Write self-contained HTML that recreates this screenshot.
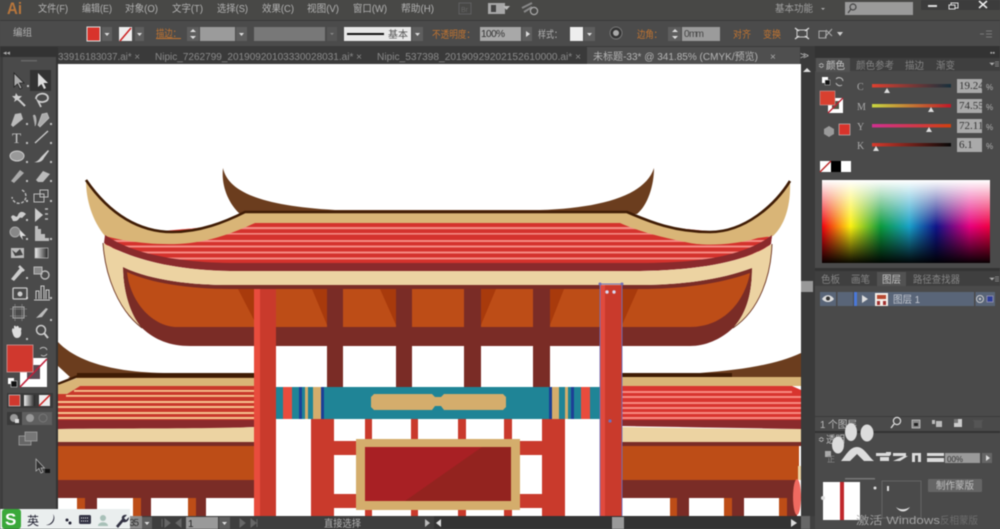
<!DOCTYPE html>
<html>
<head>
<meta charset="utf-8">
<style>
html,body{margin:0;padding:0;width:1000px;height:529px;overflow:hidden;background:#4a4a4a}
svg{display:block;filter:blur(.6px)}
text{font-family:"Liberation Sans","Noto Sans CJK SC",sans-serif;font-size:10px;fill:#b2b2b2}
.o{fill:#c27430}
.d{fill:#858585}
</style>
</head>
<body>
<svg width="1000" height="529" viewBox="0 0 1000 529" xmlns="http://www.w3.org/2000/svg">
<defs>
<linearGradient id="hue" x1="0" x2="1" y1="0" y2="0">
<stop offset="0" stop-color="#f00010"/><stop offset=".17" stop-color="#fdf010"/><stop offset=".35" stop-color="#0c9a3c"/><stop offset=".52" stop-color="#18a0c8"/><stop offset=".68" stop-color="#101488"/><stop offset=".88" stop-color="#e6007e"/><stop offset="1" stop-color="#f00040"/>
</linearGradient>
<linearGradient id="wh" x1="0" x2="0" y1="0" y2="1"><stop offset="0" stop-color="#fff"/><stop offset=".56" stop-color="#fff" stop-opacity="0"/></linearGradient>
<linearGradient id="bl" x1="0" x2="0" y1="0" y2="1"><stop offset=".56" stop-color="#000" stop-opacity="0"/><stop offset="1" stop-color="#000" stop-opacity=".96"/></linearGradient>
<linearGradient id="tC" x1="0" x2="1" y1="0" y2="0"><stop offset="0" stop-color="#e04030"/><stop offset="1" stop-color="#17303c"/></linearGradient>
<linearGradient id="tM" x1="0" x2="1" y1="0" y2="0"><stop offset="0" stop-color="#c8d840"/><stop offset="1" stop-color="#c01828"/></linearGradient>
<linearGradient id="tY" x1="0" x2="1" y1="0" y2="0"><stop offset="0" stop-color="#d03090"/><stop offset="1" stop-color="#d04010"/></linearGradient>
<linearGradient id="tK" x1="0" x2="1" y1="0" y2="0"><stop offset="0" stop-color="#d83a2c"/><stop offset="1" stop-color="#080808"/></linearGradient>
<linearGradient id="gr" x1="0" x2="1" y1="0" y2="0"><stop offset="0" stop-color="#eee"/><stop offset="1" stop-color="#222"/></linearGradient>
<clipPath id="roofclip"><path d="M105 236L255 223L622 223L772 237L770 245C745 262 720 265 640 265L230 265C170 265 125 255 105 245Z"/></clipPath>
<clipPath id="canvas"><rect x="58" y="64" width="743" height="452"/></clipPath>
</defs>

<!-- base -->
<rect width="1000" height="529" fill="#4a4a4a"/>
<rect y="0" width="1000" height="20" fill="#484846"/>
<rect y="20" width="1000" height="1.5" fill="#3a3a3a"/>
<rect y="21" width="1000" height="26" fill="#4b4b4b"/>
<rect y="46" width="815" height="18" fill="#3a3a3a"/>
<rect x="0" y="47" width="58" height="482" fill="#4a4a4a"/>
<rect x="0" y="47" width="3" height="482" fill="#3d3d3d"/>
<rect x="0" y="47" width="58" height="10" fill="#333"/>
<rect x="56" y="57" width="2" height="460" fill="#333"/>
<rect x="587" y="47" width="213" height="17" fill="#4f4f4f"/>

<!-- canvas -->
<rect x="58" y="64" width="743" height="452" fill="#fff"/>
<g clip-path="url(#canvas)">
  <!-- lower wings left -->
  <path d="M58 342C75 360 110 373 170 373L254 373V378H58Z" fill="#6b3d1e"/>
  <path d="M58 366L70 377L58 382Z" fill="#fff"/>
  <rect x="77" y="373" width="177" height="4.5" fill="#3f1c05"/>
  <path d="M58 384L78 376" stroke="#3f1c05" stroke-width="2.5"/>
  <path d="M58 385L77 378H254V386H80L67 394H58Z" fill="#d9b577"/>
  <path d="M67 394L80 386H254V421H58V394Z" fill="#c8382b"/>
  <g fill="#f7c48e">
    <rect x="74" y="390" width="180" height="1.8"/><rect x="66" y="395" width="188" height="1.8"/>
    <rect x="58" y="401" width="196" height="2"/><rect x="58" y="406" width="196" height="2"/>
    <rect x="58" y="412" width="196" height="2"/><rect x="58" y="417" width="196" height="2"/>
  </g>
  <path d="M58 420L254 420V427C200 430 120 428 58 429Z" fill="#8a2a2c"/>
  <path d="M58 429C120 428 200 429 254 427V442H58Z" fill="#ecd3a2"/>
  <rect x="58" y="442" width="196" height="4" fill="#7a2c26"/>
  <rect x="58" y="446" width="196" height="34" fill="#bd4d17"/>
  <rect x="58" y="480" width="196" height="18" fill="#7a2c26"/>
  <g fill="#bd4d17"><rect x="77" y="498" width="8" height="18"/><rect x="133" y="498" width="8" height="18"/><rect x="188" y="498" width="8" height="18"/></g>
  <g fill="#7a2c26"><rect x="85" y="498" width="12" height="18"/><rect x="141" y="498" width="10" height="18"/><rect x="196" y="498" width="10" height="18"/></g>

  <!-- lower wings right -->
  <path d="M622 373L700 373C740 370 775 365 801 353V378H622Z" fill="#6b3d1e"/>
  <rect x="622" y="373" width="110" height="4.5" fill="#3f1c05"/>
  <rect x="622" y="377" width="179" height="9" fill="#d9b577"/>
  <path d="M622 386H792L801 390V421H622Z" fill="#d8352f"/>
  <g fill="#f88a80">
    <rect x="622" y="391" width="170" height="2"/><rect x="622" y="396" width="179" height="2"/>
    <rect x="622" y="402" width="179" height="2"/><rect x="622" y="407" width="179" height="2"/>
    <rect x="622" y="412" width="179" height="2"/><rect x="622" y="417" width="179" height="2"/>
  </g>
  <path d="M622 420H801V429C740 428 680 427 622 426Z" fill="#8a2a2c"/>
  <path d="M622 427C680 428 740 429 801 429V442H622Z" fill="#ecd3a2"/>
  <rect x="622" y="442" width="179" height="4" fill="#7a2c26"/>
  <rect x="622" y="446" width="177" height="34" fill="#bd4d17"/>
  <rect x="622" y="480" width="175" height="18" fill="#7a2c26"/>
  <g fill="#bd4d17"><rect x="670" y="498" width="7" height="18"/><rect x="724" y="498" width="8" height="18"/><rect x="779" y="498" width="8" height="18"/></g>
  <g fill="#7a2c26"><rect x="677" y="498" width="12" height="18"/><rect x="732" y="498" width="12" height="18"/><rect x="787" y="498" width="10" height="18"/></g>
  <ellipse cx="797" cy="497" rx="4" ry="18" fill="#f06a60"/>
  <rect x="798" y="466" width="3" height="14" fill="#ecd3a2"/>

  <!-- back roof -->
  <path d="M223 168C228 192 262 206 335 210L540 210C600 208 645 196 654 168C654 185 648 205 637 214H240C228 203 221 185 223 168Z" fill="#6b3d1e"/>

  <!-- main body maroon + orange -->
  <path d="M123 267C150 280 190 285 230 285H640C680 285 720 280 752 268C752 290 748 312 733 328C720 340 705 346 690 346H190C170 346 155 340 142 328C130 315 123 290 123 267Z" fill="#7a2c26"/>
  <path d="M127 272C150 283 190 289 230 289H640C680 289 720 284 750 273C745 300 725 327 690 327H175C150 325 130 300 127 272Z" fill="#bd4d17"/>
  <!-- shades -->
  <g fill="#a83a0c">
    <path d="M238 289H254V320Z"/><path d="M312 289H327V325Z"/><path d="M380 289H396V325Z"/>
    <path d="M481 289H496L481 325Z"/><path d="M550 289H564L550 325Z"/><path d="M622 289H638L622 325Z"/>
  </g>
  <!-- columns -->
  <g fill="#7a2c26">
    <rect x="327" y="289" width="16" height="98"/><rect x="396" y="289" width="16" height="98"/>
    <rect x="464" y="289" width="17" height="98"/><rect x="533" y="289" width="17" height="98"/>
  </g>

  <!-- red roof -->
  <path d="M105 236L255 223L622 223L772 237L770 245C745 262 720 265 640 265L230 265C170 265 125 255 105 245Z" fill="#d4322d"/>
  <g clip-path="url(#roofclip)" fill="#f58a82">
    <rect x="90" y="227" width="700" height="2.2"/>
    <rect x="90" y="233" width="700" height="1.6"/>
    <rect x="90" y="240" width="700" height="2"/>
    <rect x="90" y="245.500" width="700" height="2"/>
    <rect x="90" y="251.500" width="700" height="2"/>
    <rect x="90" y="257.500" width="700" height="2"/>
  </g>
  <!-- tan -->
  <path d="M86 180C110 215 140 232 172 232C200 232 225 222 245 213L627 212C650 222 675 232 710 232C745 232 775 205 790 181C791 205 785 225 773 236L758 238C735 245 705 246 690 243C665 238 640 232 620 223H255C235 232 215 240 190 243C165 246 130 243 105 236C92 220 86 200 86 180Z" fill="#d9b577"/>
  <path d="M86 180C110 215 140 232 172 232C200 232 225 222 245 212H627C650 222 675 232 710 232C745 232 775 205 790 181" fill="none" stroke="#3f1c05" stroke-width="2.600"/>
  <!-- maroon band -->
  <path d="M105 235C130 252 170 262 230 263H640C700 263 745 256 772 235L771 244C745 262 700 270 640 271H230C170 270 130 258 104 243Z" fill="#8a2a2c"/>
  <!-- cream -->
  <path d="M103 243C130 258 170 270 230 271H640C700 270 745 262 772 244C771 275 760 310 733 328C748 312 752 290 752 268C720 280 680 285 640 285H230C190 285 150 280 123 267C123 290 130 315 142 328C118 310 105 275 103 243Z" fill="#ecd3a2"/>
  <path d="M103 243C105 275 118 310 142 328M772 244C771 275 760 310 733 328" fill="none" stroke="#6b3320" stroke-width=".9"/>

  <!-- teal band -->
  <rect x="276" y="387" width="324" height="32" fill="#1f8496"/>
  <g fill="#e84c3d"><rect x="283" y="387" width="9" height="32"/><rect x="581" y="387" width="9" height="32"/></g>
  <g fill="#1c3f96"><rect x="299" y="387" width="3" height="32"/><rect x="321" y="387" width="3" height="32"/><rect x="549" y="387" width="3" height="32"/><rect x="571" y="387" width="3" height="32"/></g>
  <g fill="#d4ad6c"><rect x="305" y="387" width="3" height="32"/><rect x="313" y="387" width="8" height="32"/><rect x="552" y="387" width="7" height="32"/><rect x="565" y="387" width="3" height="32"/></g>
  <path d="M374 394H432L435 397H441L444 394H503L506 397V407L503 410H444L441 406H435L432 410H374L371 407V397Z" fill="#d4ad6c"/>

  <!-- lower structure -->
  <g fill="#c93a2c">
    <rect x="311" y="419" width="23" height="97"/><rect x="542" y="419" width="23" height="97"/>
    <rect x="365" y="419" width="7" height="97"/><rect x="411" y="419" width="7" height="97"/>
    <rect x="458" y="419" width="8" height="97"/><rect x="504" y="419" width="8" height="97"/>
    <rect x="334" y="441" width="208" height="14"/><rect x="334" y="494" width="208" height="14"/>
  </g>
  <rect x="356" y="439" width="164" height="71" fill="#d4ad6c"/>
  <rect x="365" y="447" width="146" height="54" fill="#a82024"/>
  <path d="M482 447H511V501H405Z" fill="#93231f"/>

  <!-- main pillars -->
  <rect x="254" y="289" width="22" height="227" fill="#c93a2c"/>
  <rect x="254" y="289" width="6" height="227" fill="#e84c3d"/>
  <rect x="600" y="285" width="22" height="231" fill="#c93a2c"/>
  <rect x="600" y="285" width="5" height="231" fill="#e04a3e"/>
  <!-- selection -->
  <path d="M600 284V516M622 284V516M600 284H622" fill="none" stroke="#6f6fb8" stroke-width=".9"/>
  <g fill="#6f6fb8"><circle cx="600" cy="284" r="1.500"/><circle cx="622" cy="284" r="1.500"/><circle cx="610" cy="421" r="1.600"/></g>
  <g fill="#d8d8f0"><circle cx="607" cy="292" r="1.700"/><circle cx="614" cy="292" r="1.700"/></g>
</g>

<!-- menu bar -->
<text x="7" y="14" style="font-size:17px;font-weight:bold;fill:#b8763c" textLength="15" lengthAdjust="spacingAndGlyphs">Ai</text>
<text x="38" y="12" textLength="30" lengthAdjust="spacingAndGlyphs">文件(F)</text>
<text x="82" y="12" textLength="30" lengthAdjust="spacingAndGlyphs">编辑(E)</text>
<text x="125" y="12" textLength="33" lengthAdjust="spacingAndGlyphs">对象(O)</text>
<text x="172" y="12" textLength="31" lengthAdjust="spacingAndGlyphs">文字(T)</text>
<text x="217" y="12" textLength="31" lengthAdjust="spacingAndGlyphs">选择(S)</text>
<text x="262" y="12" textLength="32" lengthAdjust="spacingAndGlyphs">效果(C)</text>
<text x="307" y="12" textLength="32" lengthAdjust="spacingAndGlyphs">视图(V)</text>
<text x="353" y="12" textLength="34" lengthAdjust="spacingAndGlyphs">窗口(W)</text>
<text x="401" y="12" textLength="33" lengthAdjust="spacingAndGlyphs">帮助(H)</text>
<rect x="459" y="3" width="12" height="11" fill="none" stroke="#5f5f5f"/>
<text x="461" y="12" style="font-size:7px;fill:#666">Br</text>
<rect x="488" y="3" width="17" height="11" fill="#a8a8a8"/>
<rect x="491" y="5" width="5" height="7" fill="#444"/>
<path d="M503 6H510L506.500 10Z" fill="#bbb"/>
<path d="M522 8L532 3M524 12L532 7" stroke="#888" stroke-width="2"/>
<circle cx="534" cy="11" r="3.600" fill="none" stroke="#aaa" stroke-width="1.200"/>
<text x="775" y="12" textLength="38" lengthAdjust="spacingAndGlyphs" style="fill:#a0a0a0">基本功能</text>
<path d="M821 8H825L823 10Z" fill="#aaa"/>
<rect x="845" y="2" width="68" height="13" fill="#9a9a9a"/>
<circle cx="853" cy="7" r="3" fill="none" stroke="#444" stroke-width="1.200"/>
<path d="M851 9L848 13" stroke="#444" stroke-width="1.200"/>
<rect x="921" y="0" width="79" height="10" fill="#3c3c3c"/>
<rect x="928" y="5" width="9" height="2" fill="#ddd"/>
<rect x="951" y="3" width="7" height="5" fill="none" stroke="#ddd"/><rect x="949" y="5" width="6" height="4" fill="#3c3c3c" stroke="#ddd"/>
<path d="M979 1L987 8M987 1L979 8" stroke="#eee" stroke-width="1.500"/>

<!-- control bar -->
<text x="13" y="36" textLength="19" lengthAdjust="spacingAndGlyphs">编组</text>
<rect x="87" y="27" width="13" height="14" fill="#d8332b" stroke="#ddd"/>
<rect x="102" y="27" width="10" height="14" fill="#5e5e5e"/><path d="M104.500 33H109.500L107 36Z" fill="#ddd"/>
<rect x="119" y="27" width="13" height="14" fill="#eee"/><path d="M120 41L131 28" stroke="#c22" stroke-width="1.500"/>
<rect x="135" y="27" width="9" height="14" fill="#5e5e5e"/><path d="M137 33H142L139.500 36Z" fill="#ddd"/>
<text x="156" y="37" class="o" textLength="25" lengthAdjust="spacingAndGlyphs" text-decoration="underline">描边：</text>
<rect x="187" y="27" width="12" height="14" fill="#5e5e5e"/><path d="M190 32L193 29L196 32ZM190 36L193 39L196 36Z" fill="#ddd"/>
<rect x="200" y="27" width="35" height="14" fill="#9b9b9b"/>
<rect x="236" y="27" width="11" height="14" fill="#5e5e5e"/><path d="M239 33H244L241.500 36Z" fill="#ddd"/>
<rect x="254" y="27" width="71" height="14" fill="#787878"/>
<rect x="327" y="27" width="10" height="14" fill="#555"/><path d="M330 33H334L332 35Z" fill="#888"/>
<rect x="344" y="27" width="67" height="14" fill="#e8e8e8"/>
<rect x="347" y="33" width="37" height="2" fill="#111"/>
<text x="388" y="38" style="fill:#555" textLength="20" lengthAdjust="spacingAndGlyphs">基本</text>
<rect x="412" y="27" width="11" height="14" fill="#5e5e5e"/><path d="M415 33H420L417.500 36Z" fill="#ddd"/>
<text x="432" y="38" class="o" textLength="43" lengthAdjust="spacingAndGlyphs">不透明度：</text>
<rect x="480" y="27" width="41" height="14" fill="#a8a8a8"/>
<text x="481" y="37" style="fill:#333" textLength="24">100%</text>
<rect x="522" y="27" width="10" height="14" fill="#5e5e5e"/><path d="M526 31L530 34L526 37Z" fill="#ddd"/>
<text x="538" y="38" textLength="24" lengthAdjust="spacingAndGlyphs">样式：</text>
<rect x="570" y="27" width="13" height="14" fill="#eee"/>
<rect x="584" y="27" width="11" height="14" fill="#5e5e5e"/><path d="M587 33H592L589.500 36Z" fill="#ddd"/>
<circle cx="616" cy="33" r="6" fill="#333" stroke="#777"/><circle cx="616" cy="33" r="3" fill="#aaa"/>
<text x="637" y="38" class="o" textLength="25" lengthAdjust="spacingAndGlyphs">边角：</text>
<rect x="668" y="27" width="13" height="14" fill="#5e5e5e"/><path d="M672 32L675 29L678 32ZM672 36L675 39L678 36Z" fill="#ddd"/>
<rect x="682" y="27" width="38" height="14" fill="#9b9b9b"/>
<text x="684" y="37" style="fill:#444" textLength="20">0 mm</text>
<text x="733" y="38" class="o" textLength="18" lengthAdjust="spacingAndGlyphs">对齐</text>
<text x="763" y="38" class="o" textLength="18" lengthAdjust="spacingAndGlyphs">变换</text>
<rect x="797" y="30" width="10" height="7" fill="none" stroke="#ccc"/>
<path d="M795 28L799 31M809 28L805 31M795 39L799 36M809 39L805 36" stroke="#ddd" stroke-width="1.300"/>
<path d="M819 31H826V38H819ZM825 37L832 29M826 30L832 36" fill="none" stroke="#aaa"/>
<path d="M837 32H843L840 36Z" fill="#ccc"/>
<path d="M980 34H984M986 31H992M986 34H992M986 37H992" stroke="#777"/>

<!-- tabs -->
<text x="58" y="60" style="fill:#8a8a8a" textLength="82" lengthAdjust="spacingAndGlyphs">33916183037.ai* ×</text>
<text x="155" y="60" style="fill:#8a8a8a" textLength="207" lengthAdjust="spacingAndGlyphs">Nipic_7262799_20190920103330028031.ai* ×</text>
<text x="377" y="60" style="fill:#8a8a8a" textLength="204" lengthAdjust="spacingAndGlyphs">Nipic_537398_20190929202152610000.ai* ×</text>
<text x="593" y="60" style="fill:#b5b5b5" textLength="165" lengthAdjust="spacingAndGlyphs">未标题-33* @ 341.85% (CMYK/预览)</text>
<text x="770" y="60" style="fill:#aaa">×</text>
<text x="800" y="59" style="fill:#bbb" textLength="9">&gt;&gt;</text>
<text x="3" y="55" style="font-size:7px;fill:#aaa">◂◂</text>
<rect x="21" y="60" width="16" height="1.500" fill="#666"/>

<!-- toolbox -->
<path d="M14 73V87L17.500 84L20 89L22 88L19.500 83L24 83Z" fill="#aaa" stroke="#222" stroke-width=".8"/>
<rect x="30" y="70" width="21" height="21" fill="#333"/>
<path d="M38 73V87L41.500 84L44 89L46 88L43.500 83L48 83Z" fill="#ddd"/>
<path d="M16 93L18 96L22 96L19 99L20 102L17 100L14 102L15 99L12 96L15 96Z" fill="#ccc"/>
<path d="M19 100L25 106" stroke="#ccc" stroke-width="2"/>
<path d="M36 99C36 92 48 92 48 98C48 102 41 103 38 101L41 107" fill="none" stroke="#ccc" stroke-width="1.800"/>
<path d="M11 125L15 114L21 113L23 119L13 127Z" fill="#bbb"/>
<path d="M33 116C36 112 37 122 35 126M38 125L42 114L47 113L49 118L40 127Z" fill="#aaa" stroke="#ccc" stroke-width=".6"/>
<text x="12" y="143" style="font-size:15px;font-family:'Liberation Serif',serif;fill:#c6c6c6">T</text>
<path d="M35 143L48 131" stroke="#c6c6c6" stroke-width="1.500"/>
<ellipse cx="17" cy="156" rx="7" ry="5" fill="#999" stroke="#ccc"/>
<path d="M34 162C38 162 40 158 42 156L48 150L49 151L44 158C42 162 38 163 34 162Z" fill="#ccc"/>
<path d="M11 181L20 170L24 173L14 183Z" fill="#aaa"/>
<path d="M36 180L43 171L50 174L43 182L38 182Z" fill="#bbb"/>
<path d="M22 190A7 7 0 1 1 12 197" fill="none" stroke="#bbb" stroke-width="1.400" stroke-dasharray="3 1.500"/>
<rect x="34" y="194" width="10" height="8" fill="none" stroke="#bbb"/><rect x="40" y="190" width="8" height="7" fill="none" stroke="#bbb"/>
<path d="M11 217C14 212 16 220 18 215C20 210 24 212 26 214L22 218C18 216 20 222 13 221Z" fill="#ccc"/>
<path d="M35 208L43 215L35 222Z" fill="#ccc"/><path d="M45 209H48M45 214H48M45 219H48" stroke="#bbb" stroke-width="1.500"/>
<circle cx="15" cy="232" r="5" fill="#888" stroke="#aaa"/><path d="M20 230L26 236L22 236L23 240L20 236Z" fill="#ddd"/>
<path d="M35 226V241H49V238H45V234H41V229H38V226Z" fill="#bbb"/>
<rect x="11" y="248" width="13" height="10" fill="#bbb"/><path d="M12 250L16 253L20 249L23 255L15 256Z" fill="#444"/>
<rect x="35" y="248" width="13" height="10" fill="url(#gr)" stroke="#bbb" stroke-width=".7"/>
<path d="M11 279L20 268L23 271L14 281Z" fill="#ccc"/><path d="M19 266L24 271" stroke="#ccc" stroke-width="2.500"/>
<rect x="34" y="267" width="8" height="7" fill="#888" stroke="#bbb"/><circle cx="45" cy="275" r="4" fill="none" stroke="#bbb" stroke-width="1.400"/>
<rect x="13" y="288" width="14" height="11" rx="1" fill="none" stroke="#ccc" stroke-width="1.300"/><circle cx="20" cy="294" r="2.500" fill="#ccc"/>
<path d="M36 299V291H39V299M41 299V286H44V299M46 299V290H49V299M34 300H50" stroke="#ccc" fill="none"/>
<rect x="13" y="307" width="11" height="11" fill="none" stroke="#aaa"/><path d="M10 309H27M10 316H27M15 304V321M22 304V321" stroke="#999" stroke-width=".6"/>
<path d="M36 318L46 308L48 309L42 317Z" fill="#bbb"/>
<path d="M12 331C12 327 14 328 14 330V326C15 325 16 326 16 327C17 325 19 326 19 328C21 327 22 328 21 331C22 335 20 338 17 338C14 338 13 335 12 331Z" fill="#ddd"/>
<circle cx="41" cy="330" r="4.500" fill="none" stroke="#ccc" stroke-width="1.500"/><path d="M44 333L48 338" stroke="#ccc" stroke-width="2"/>
<path d="M27 85h2v2h-2zM26 123h2v2h-2zM50 123h2v2h-2zM26 142h2v2h-2zM50 142h2v2h-2zM26 161h2v2h-2zM50 161h2v2h-2zM26 180h2v2h-2zM50 180h2v2h-2zM26 200h2v2h-2zM50 200h2v2h-2zM26 219h2v2h-2zM26 238h2v2h-2zM50 238h2v2h-2zM26 277h2v2h-2zM26 297h2v2h-2zM50 297h2v2h-2zM50 319h2v2h-2zM26 338h2v2h-2z" fill="#ddd" opacity=".8"/>

<!-- colour boxes -->
<rect x="20" y="358" width="27" height="29" fill="#fff"/>
<rect x="27" y="365" width="13" height="14" fill="#5c4a52"/>
<rect x="7" y="345" width="26" height="27" fill="#d0382e" stroke="#c99" stroke-width=".8"/>
<path d="M20 387L47 359" stroke="#c0203a" stroke-width="1.600"/>
<path d="M40 349A4 4 0 0 1 47 350" fill="none" stroke="#bbb"/><path d="M41 355A4 4 0 0 0 47 354" fill="none" stroke="#bbb"/>
<rect x="8" y="378" width="6" height="6" fill="#fff"/><rect x="11" y="381" width="6" height="6" fill="#111" stroke="#ccc" stroke-width=".6"/>
<rect x="7" y="393" width="46" height="15" fill="#3a3a3a"/>
<rect x="9" y="395" width="11" height="11" fill="#d0382e" stroke="#ddd" stroke-width=".6"/>
<rect x="24" y="395" width="11" height="11" fill="url(#gr)"/>
<rect x="39" y="395" width="11" height="11" fill="#eee"/><path d="M39 406L50 395" stroke="#c22" stroke-width="1.500"/>
<rect x="7" y="412" width="45" height="13" fill="#5f5f5f"/><rect x="7" y="412" width="15" height="13" fill="#3a3a3a"/>
<circle cx="14" cy="418" r="4" fill="#999"/><rect x="15" y="419" width="4" height="4" fill="#ddd"/>
<circle cx="30" cy="418" r="4" fill="#999"/><circle cx="43" cy="418" r="4" fill="none" stroke="#777"/>
<rect x="19" y="436" width="12" height="9" fill="#666" stroke="#aaa" stroke-width=".7"/>
<rect x="25" y="432" width="12" height="9" fill="#777" stroke="#aaa" stroke-width=".7"/>
<path d="M36 459V471L39 468.500L41 473L43 472L41 468L44.500 468Z" fill="#333" stroke="#bbb" stroke-width=".7"/>
<rect x="45" y="469" width="5" height="4" fill="#111"/>

<!-- status bar -->
<rect x="58" y="516" width="743" height="13" fill="#3e3e3e"/>
<rect x="130" y="516" width="12" height="13" fill="#8b8b8b"/>
<text x="129" y="526" style="fill:#333" textLength="10">35</text>
<rect x="142" y="517" width="10" height="12" fill="#5e5e5e"/><path d="M144.500 522H149.500L147 525Z" fill="#ddd"/>
<path d="M162 519V527M170 523L165 519V527ZM181 519L176 523L181 527Z" fill="#666" stroke="#666"/>
<rect x="186" y="517" width="32" height="12" fill="#9a9a9a"/>
<text x="188" y="527" style="fill:#222">1</text>
<rect x="219" y="517" width="11" height="12" fill="#5e5e5e"/><path d="M222 522H227L224.500 525Z" fill="#ddd"/>
<path d="M240 519L245 523L240 527ZM251 519L256 523L251 527ZM257 519V527" fill="#666" stroke="#666"/>
<text x="324" y="527" textLength="37" lengthAdjust="spacingAndGlyphs">直接选择</text>
<path d="M425 519L430 523L425 527Z" fill="#bbb"/>
<rect x="434" y="516" width="367" height="13" fill="#333"/>
<path d="M441 519L436 523L441 527Z" fill="#ddd"/>
<rect x="612" y="517" width="12" height="12" fill="#9a9a9a"/>
<path d="M791 519L797 523L791 527Z" fill="#ddd"/>
<rect x="801" y="516" width="9" height="13" fill="#666"/>

<!-- IME bar -->
<rect x="0" y="509" width="130" height="20" fill="#eaeeee"/>
<rect x="2" y="509" width="19" height="20" rx="3" fill="#3aa83a"/>
<text x="5" y="525" style="font-size:17px;font-weight:bold;fill:#fff">S</text>
<text x="27" y="525" style="font-size:12px;fill:#223">英</text>
<path d="M53 514A7 7 0 0 1 46 525A8 8 0 0 0 53 514Z" fill="#223"/>
<circle cx="67" cy="520" r="1.500" fill="#223"/><circle cx="70" cy="523" r="1.500" fill="#223"/>
<rect x="79" y="515" width="12" height="9" rx="1.500" fill="#334"/>
<path d="M81 518H89M81 521H89" stroke="#eee" stroke-dasharray="1 1"/>
<circle cx="103" cy="518" r="3" fill="#a8c0b8"/><path d="M98 526C98 521 108 521 108 526Z" fill="#a8c0b8"/>
<path d="M116 526L122 519C121 516 124 514 127 515L124 518L126 520L129 517C129 521 126 523 123 522L118 528Z" fill="#334"/>

<!-- right strip -->
<rect x="801" y="64" width="14" height="452" fill="#3a3a3a"/>
<path d="M803 72L807 68L811 72Z" fill="#ddd"/>
<rect x="801" y="281" width="12" height="11" fill="#999"/>
<rect x="815" y="46" width="185" height="12" fill="#333"/>
<text x="990" y="55" style="font-size:7px;fill:#aaa">▪▪</text>
<rect x="810" y="516" width="5" height="13" fill="#404040"/>

<!-- colour panel -->
<rect x="815" y="58" width="185" height="13" fill="#3f3f3f"/>
<rect x="816" y="58" width="34" height="14" fill="#525252"/>
<text x="818" y="68" style="font-size:8px;fill:#ccc">≎</text>
<text x="826" y="69" style="fill:#c8c8c8" textLength="19" lengthAdjust="spacingAndGlyphs">颜色</text>
<text x="856" y="69" class="d" textLength="38" lengthAdjust="spacingAndGlyphs">颜色参考</text>
<text x="905" y="69" class="d" textLength="19" lengthAdjust="spacingAndGlyphs">描边</text>
<text x="936" y="69" class="d" textLength="19" lengthAdjust="spacingAndGlyphs">渐变</text>
<path d="M990 63H994L992 65ZM995 62H999M995 64H999M995 66H999" stroke="#999" fill="#ccc" stroke-width=".7"/>
<rect x="822" y="77" width="6" height="6" fill="#fff"/><rect x="825" y="80" width="5" height="5" fill="#111" stroke="#ccc" stroke-width=".5"/>
<path d="M836 79A4 4 0 0 1 843 81M836 83A4 4 0 0 0 842 85" fill="none" stroke="#bbb"/>
<rect x="828" y="98" width="15" height="15" fill="#fff"/><rect x="832" y="101" width="7" height="8" fill="#554"/>
<rect x="820" y="91" width="15" height="14" fill="#d8402f" stroke="#c99" stroke-width=".6"/>
<path d="M828 113L843 98" stroke="#b82030" stroke-width="1.300"/>
<path d="M829 126L834 129V134L829 137L824 134V129Z" fill="#9a9a9a"/>
<rect x="839" y="124" width="11" height="11" fill="#d8332b" stroke="#ccc" stroke-width=".6"/>
<text x="857" y="90" style="font-family:'Liberation Serif',serif;fill:#aaa">C</text>
<text x="857" y="110" style="font-family:'Liberation Serif',serif;fill:#aaa">M</text>
<text x="857" y="130" style="font-family:'Liberation Serif',serif;fill:#aaa">Y</text>
<text x="857" y="149" style="font-family:'Liberation Serif',serif;fill:#aaa">K</text>
<rect x="872" y="84" width="79" height="3.500" fill="url(#tC)"/>
<rect x="872" y="104" width="79" height="3.500" fill="url(#tM)"/>
<rect x="872" y="124" width="79" height="3.500" fill="url(#tY)"/>
<rect x="872" y="143" width="79" height="3.500" fill="url(#tK)"/>
<g fill="#ddd">
<path d="M884 93L887 88L890 93Z"/><path d="M928 112L931 107L934 112Z"/><path d="M926 132L929 127L932 132Z"/><path d="M873 151L876 146L879 151Z"/>
</g>
<g fill="#aaaaaa">
<rect x="957" y="79" width="25" height="14"/><rect x="957" y="99" width="25" height="14"/>
<rect x="957" y="119" width="25" height="14"/><rect x="957" y="138" width="25" height="14"/>
</g>
<text x="959" y="89" style="fill:#333;font-family:'Liberation Serif',serif;font-size:11px">19.24</text>
<text x="959" y="109" style="fill:#333;font-family:'Liberation Serif',serif;font-size:11px">74.55</text>
<text x="959" y="129" style="fill:#333;font-family:'Liberation Serif',serif;font-size:11px">72.11</text>
<text x="959" y="148" style="fill:#333;font-family:'Liberation Serif',serif;font-size:11px">6.1</text>
<rect x="982" y="79" width="4" height="73" fill="#4a4a4a"/>
<text x="986" y="90" style="font-size:8px">%</text><text x="986" y="110" style="font-size:8px">%</text><text x="986" y="130" style="font-size:8px">%</text><text x="986" y="149" style="font-size:8px">%</text>
<rect x="820" y="161" width="11" height="11" fill="#fff"/><path d="M820 172L831 161" stroke="#b22" stroke-width="1.300"/>
<rect x="831" y="161" width="10" height="11" fill="#000"/>
<rect x="841" y="161" width="10" height="11" fill="#fff"/>
<rect x="822" y="180" width="168" height="83" fill="url(#hue)"/>
<rect x="822" y="180" width="168" height="83" fill="url(#wh)"/>
<rect x="822" y="180" width="168" height="83" fill="url(#bl)"/>

<!-- layers panel -->
<rect x="815" y="268" width="185" height="3" fill="#333"/>
<rect x="815" y="271" width="185" height="15" fill="#3f3f3f"/>
<rect x="877" y="272" width="29" height="14" fill="#525252"/>
<text x="821" y="283" class="d" textLength="19" lengthAdjust="spacingAndGlyphs">色板</text>
<text x="851" y="283" class="d" textLength="19" lengthAdjust="spacingAndGlyphs">画笔</text>
<text x="882" y="283" style="fill:#c8c8c8" textLength="19" lengthAdjust="spacingAndGlyphs">图层</text>
<text x="913" y="283" class="d" textLength="47" lengthAdjust="spacingAndGlyphs">路径查找器</text>
<path d="M990 278H994L992 280ZM995 277H999M995 279H999M995 281H999" stroke="#999" fill="#ccc" stroke-width=".7"/>
<rect x="820" y="292" width="175" height="14" fill="#596578"/>
<rect x="836" y="292" width="1.500" height="14" fill="#4a4a4a"/>
<rect x="853" y="292" width="1" height="14" fill="#4a4a4a"/>
<rect x="854" y="292" width="3" height="14" fill="#4a78d8"/>
<path d="M822 299C825 294 831 294 834 299C831 303 825 303 822 299Z" fill="#ddd"/><circle cx="828" cy="298.500" r="2" fill="#333"/>
<path d="M862 295L868 299L862 303Z" fill="#ddd"/>
<rect x="875" y="293" width="13" height="13" fill="#f4eee8"/><rect x="877" y="295" width="9" height="4" fill="#b84a32"/><rect x="877" y="301" width="3" height="4" fill="#a03030"/><rect x="883" y="301" width="3" height="4" fill="#a03030"/>
<text x="893" y="303" style="fill:#c4c8d0" textLength="27" lengthAdjust="spacingAndGlyphs">图层 1</text>
<rect x="974" y="292" width="1.500" height="14" fill="#4a4a4a"/>
<circle cx="980" cy="299" r="3.500" fill="none" stroke="#ccc"/><circle cx="980" cy="299" r="1.200" fill="#ccc"/>
<rect x="987" y="296" width="6" height="6" fill="#2c3d9a" stroke="#88a"/>
<rect x="815" y="416" width="185" height="1" fill="#3a3a3a"/>
<text x="820" y="428" style="fill:#bcbcbc" textLength="37" lengthAdjust="spacingAndGlyphs">1 个图层</text>
<circle cx="897" cy="421" r="3.600" fill="none" stroke="#ddd" stroke-width="1.200"/><path d="M894 424L891 428" stroke="#ddd" stroke-width="1.400"/>
<rect x="912" y="420" width="8" height="8" fill="#888" stroke="#ccc" stroke-width=".7"/><rect x="914" y="423" width="4" height="3" fill="#222"/>
<path d="M932 420H935V424H932ZM936 421H942V427H936Z" fill="#bbb"/>
<rect x="954" y="419" width="8" height="8" fill="#ccc"/><rect x="954" y="419" width="4" height="4" fill="#777"/>
<rect x="974" y="421" width="8" height="7" fill="#555"/><rect x="973" y="420" width="10" height="1" fill="#555"/>
<rect x="815" y="431" width="185" height="2" fill="#333"/>

<!-- transparency panel -->
<text x="818" y="442" style="font-size:8px;fill:#ccc">≎</text>
<text x="826" y="443" style="fill:#bbb" textLength="19" lengthAdjust="spacingAndGlyphs">透明</text>
<rect x="825" y="451" width="6" height="6" fill="#aaa"/>
<text x="827" y="462" class="d" style="font-size:8px">正</text>
<rect x="945" y="453" width="35" height="10" fill="#9a9a9a"/>
<text x="947" y="462" style="font-size:8px;fill:#333">00%</text>
<rect x="982" y="453" width="10" height="10" fill="#666"/><path d="M986 455L990 458L986 461Z" fill="#ddd"/>
<rect x="823" y="482" width="37" height="38" fill="#fff"/>
<rect x="840" y="482" width="4" height="38" fill="#c0282c"/>
<rect x="882" y="481" width="39" height="37" fill="none" stroke="#636363"/>
<path d="M896 507C900 510 905 510 910 507C906 513 900 513 896 507Z" fill="#ddd"/>
<rect x="887" y="486" width="2" height="5" fill="#ddd"/>
<circle cx="875" cy="488" r="1.500" fill="#ddd"/>
<rect x="928" y="479" width="54" height="13" rx="1" fill="#656565"/>
<text x="936" y="489" style="fill:#c0c0c0" textLength="38" lengthAdjust="spacingAndGlyphs">制作蒙版</text>
<rect x="845" y="478" width="30" height="1.500" fill="#777"/>

<!-- watermark -->
<g fill="#dcdcdc">
<ellipse cx="851" cy="432" rx="6" ry="9"/><ellipse cx="867" cy="433" rx="6.500" ry="8.500"/><ellipse cx="838" cy="445" rx="6" ry="8.500"/>
<path d="M841 461C846 455 850 447 857 447C864 447 868 456 874 461L864 461L857 454L850 461Z"/>
<rect x="876" y="453" width="14" height="3"/><rect x="880" y="457" width="9" height="4"/>
<rect x="886" y="452" width="5" height="3"/>
<rect x="893" y="453" width="13" height="3"/><path d="M893 461L904 456H908L900 461Z"/>
<rect x="912" y="453" width="3" height="9"/><rect x="918" y="453" width="3" height="9"/><rect x="912" y="453" width="9" height="2.500"/>
<rect x="927" y="453" width="17" height="3"/><rect x="927" y="458" width="17" height="4"/>
</g>
<circle cx="823" cy="498" r="2" fill="#ddd"/>
<text x="856" y="524" style="font-size:11px;fill:#a0a0a0" textLength="84" lengthAdjust="spacingAndGlyphs">激活 Windows</text>
<text x="940" y="524" style="fill:#6e6e6e" textLength="38" lengthAdjust="spacingAndGlyphs">反相蒙版</text>
</svg>
</body>
</html>
